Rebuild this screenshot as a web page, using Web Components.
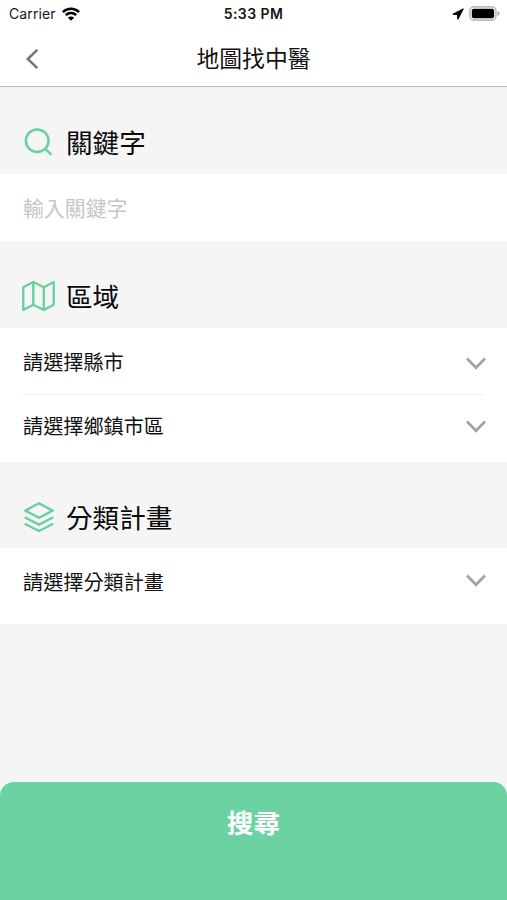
<!DOCTYPE html>
<html lang="zh-Hant">
<head>
<meta charset="utf-8">
<title>地圖找中醫</title>
<style>
html, body { margin: 0; height: 100%; }
body { font-family: "Noto Sans CJK TC", "Noto Sans", sans-serif; color: #111; background: #f5f5f5; overflow: hidden; }
</style>
</head>
<body>
<clinic-search-page></clinic-search-page>
<script>
function define(name, html) {
  const template = document.createElement('template');
  template.innerHTML = html;
  customElements.define(name, class extends HTMLElement {
    constructor() {
      super();
      this.attachShadow({ mode: 'open' }).append(template.content.cloneNode(true));
    }
  });
}

define('status-bar', `
<style>
:host { display: grid; grid-template-columns: 1fr auto 1fr; align-items: center; height: 28px; padding: 0 7px 0 9px; box-sizing: border-box; font-family: Inter, sans-serif; font-size: 14px; line-height: 26px; color: #161616; }
.left, .right { display: flex; align-items: center; }
.left { gap: 6px; letter-spacing: .12px; padding-bottom: 1px; }
.time { font-weight: 600; letter-spacing: .42px; margin-right: 2px; }
.right { justify-content: flex-end; gap: 6px; padding-bottom: 2px; }
.location { margin: 1px -1px 0 0; }
svg { display: block; flex: none; }
</style>
<div class="left"><span>Carrier</span>
<svg width="18" height="14" viewBox="0 0 18 14" fill="none" stroke="#000" stroke-width="2.5"><path d="M.9 5.1a11.5 11.5 0 0 1 16.2 0M3.8 8.2a7.4 7.4 0 0 1 10.4 0"/><path d="M9 13.8 5.9 10.7a4.4 4.4 0 0 1 6.2 0z" fill="#000" stroke="none"/></svg></div>
<span class="time">5:33 PM</span>
<div class="right">
<svg class="location" width="12" height="12" viewBox="0 0 12 12"><path d="M11.300 .8.9 6.200l4.600 .4.400 4.700z" fill="#000" stroke="#000" stroke-width="1" stroke-linejoin="round"/></svg>
<svg width="31" height="15" viewBox="0 0 31 15"><rect x=".9" y=".9" width="26" height="13.2" rx="4" fill="#fff" stroke="#bdbdbd" stroke-width="1.6"/><rect x="2.8" y="2.8" width="22.3" height="9.4" rx="2" fill="#000"/><path d="M28.5 5v5q2.2-.8 2.2-2.5T28.500 5z" fill="#aaa"/></svg>
</div>`);

define('nav-bar', `
<style>
:host { display: grid; grid-template-columns: 64px 1fr 64px; align-items: center; height: 59px; box-sizing: border-box; border-bottom: 1px solid #b9b9b9; padding-top: 1px; }
svg { display: block; margin: 3px 0 0 25px; }
h1 { margin: 0; font-size: 22.8px; font-weight: 400; line-height: 34px; text-align: center; }
</style>
<svg width="14" height="22" viewBox="0 0 14 22" fill="none" stroke="#777" stroke-width="2.600"><path d="M12.300 1.900 2.800 11l9.500 9.100"/></svg>
<h1><slot></slot></h1>`);

define('section-header', `
<style>
:host { display: flex; align-items: center; height: var(--header-height, 87px); padding: var(--header-top, 22px) 22px 0; box-sizing: border-box; background: #f5f5f5; }
.icon { width: 33px; display: flex; justify-content: center; margin-right: 11px; }
h2 { margin: 0; font-size: 26.600px; line-height: 40px; font-weight: 400; color: #080808; }
</style>
<div class="icon"><slot name="icon"></slot></div><h2><slot></slot></h2>`);

define('keyword-field', `
<style>
:host { display: flex; align-items: center; height: 67px; padding: 0 23px 2px; box-sizing: border-box; background: #fff; font-size: 20.900px; line-height: 30px; color: #c6c6c6; }
</style><slot></slot>`);

define('select-row', `
<style>
:host { display: flex; align-items: center; justify-content: space-between; box-sizing: border-box; height: 66px; padding: 2px 21px 0 23px; font-size: 20.150px; line-height: 30px; }
svg { display: block; margin-top: var(--chevron-top, 0px); }
</style>
<span><slot></slot></span>
<svg width="20" height="13" viewBox="0 0 20 13" fill="none" stroke="#a3a3a3" stroke-width="2.700"><path d="M1 1.500 10 10.700l9-9.200"/></svg>`);

define('select-group', `
<style>
:host { display: block; box-sizing: border-box; background: #fff; }
</style><slot></slot>`);

define('search-button', `
<style>
:host { display: block; height: 118px; }
button { display: block; width: 100%; height: 100%; margin: 0; padding: 20px 0 58px; border: 0; border-radius: 14px 14px 0 0; background: #6bd3a1; color: #fff; font: 700 26.500px/40px "Noto Sans CJK TC", sans-serif; }
</style><button type="button"><slot></slot></button>`);

define('clinic-search-page', `
<style>
:host { display: flex; flex-direction: column; height: 100vh; background: #f5f5f5; }
.top { background: #fff; }
svg { display: block; fill: none; stroke: #66d19e; }
.area { height: 134px; }
.plan { height: 76px; }
.line { height: 1px; margin: 0 23px; background: #f1f1f1; }
.first { --chevron-top: 2px; }
.second { height: 62px; padding-top: 0; }
.type { --chevron-top: -4px; }
.last { --header-height: 86px; --header-top: 24px; }
search-button { margin-top: auto; }
</style>
<div class="top"><status-bar></status-bar><nav-bar>地圖找中醫</nav-bar></div>
<section-header>
<svg slot="icon" width="29" height="28" viewBox="0 0 29 28" stroke-width="2.500"><circle cx="13.200" cy="12.700" r="11.300"/><path d="m21.200 20.700 6.200 6.200"/></svg>關鍵字</section-header>
<keyword-field>輸入關鍵字</keyword-field>
<section-header>
<svg slot="icon" width="33" height="32" viewBox="0 0 33 32" stroke-width="2.300" stroke-linejoin="round"><path d="M1.300 7.300 11.300 2l10.500 5.300L31.700 2v22.700L21.800 30l-10.500-5.300L1.300 30zM11.300 2v22.700M21.800 7.300V30"/></svg>區域</section-header>
<select-group class="area"><select-row class="first">請選擇縣市</select-row><div class="line"></div><select-row class="second">請選擇鄉鎮市區</select-row></select-group>
<section-header class="last">
<svg slot="icon" width="32" height="32" viewBox="0 0 32 32" stroke-width="2.400" stroke-linejoin="round"><path d="m16 2.300 13.700 7.300L16 16.800 2.300 9.600zM1.700 16.300 16 23.600l14.300-7.300M1.700 22.700 16 30l14.300-7.300"/></svg>分類計畫</section-header>
<select-group class="plan"><select-row class="type">請選擇分類計畫</select-row></select-group>
<search-button>搜尋</search-button>`);
</script>
</body>
</html>
